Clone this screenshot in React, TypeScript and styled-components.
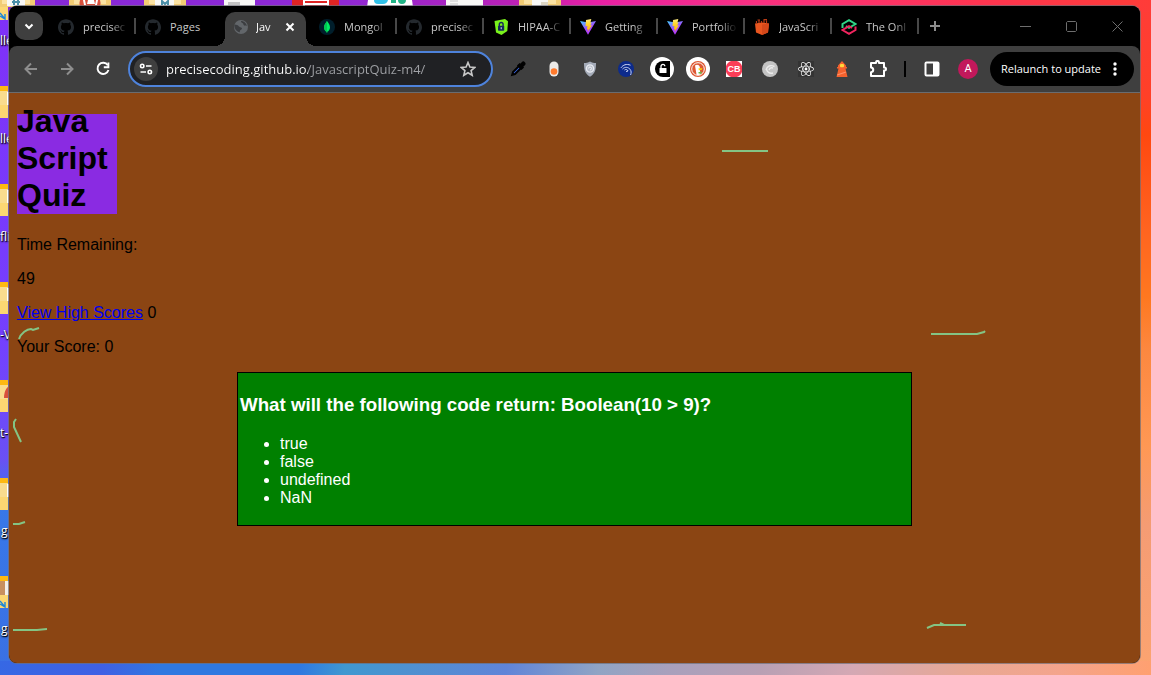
import React, { useState } from "react";
import styled, { createGlobalStyle, css } from "styled-components";
import { SiGithub } from "react-icons/si";
import { FaReact } from "react-icons/fa";

const uiFont = `"Segoe UI", "Open Sans", "Noto Sans", sans-serif`;

const GlobalStyle = createGlobalStyle`
  html, body { margin: 0; padding: 0; }
  body { background: #3a6ae8; }
`;

/* ---------- desktop ---------- */

const Desktop = styled.div`
  position: relative;
  box-sizing: border-box;
  min-height: 100vh;
  padding: 6px 11px 12px 9px;
  display: flex;
  overflow: hidden;
  background:
    linear-gradient(to right, #8628d8 0%, #8f28d4 30%, #b820b8 44%, #e820a4 52%, #fa3080 66%, #ff3450 85%, #ff3c38 100%) top / 100% 12px no-repeat,
    linear-gradient(100deg, #3668e4 0%, #4060e4 9%, #3078e0 14%, #3078e0 26%, #4098d0 30%, #5090d0 36%, #6084d8 44%, #90a4c4 52%, #a8a0bc 58%, #b8a0b4 66%, #d4a8b4 74%, #e8a894 84%, #f4a48c 92%, #ffa070 100%) bottom / 100% 14px no-repeat,
    linear-gradient(to bottom, #8030f8 0%, #7440ff 50%, #6a50f4 68%, #3878e8 74%, #3a70e4 100%) left / 12px 100% no-repeat,
    linear-gradient(to bottom, #ff3c38 0%, #ff4028 14%, #ff4810 20%, #ff6420 34%, #ff7820 44%, #fc8840 52%, #ff9854 66%, #f49c74 78%, #fca470 100%) right / 14px 100% no-repeat;
`;

const Wallpaper = styled.div`
  position: absolute;
  inset: 0;
`;

const TopIcons = styled.svg`
  position: absolute;
  top: 0;
  left: 0;
  display: block;
`;

const Shortcut = styled.div<{ $row: number }>`
  position: absolute;
  left: 0;
  top: ${(p) => p.$row * 98 - 12}px;
  width: 60px;
`;

const ShortcutLabel = styled.span<{ $indent: number }>`
  display: block;
  margin-top: 12px;
  margin-left: ${(p) => p.$indent}px;
  color: #fff;
  font: 12px/16px ${uiFont};
  text-shadow: 0 1px 2px #000, 1px 1px 1px #000;
  white-space: nowrap;
`;

/* ---------- browser window ---------- */

const Window = styled.main`
  position: relative;
  flex: 1;
  min-width: 0;
  display: flex;
  flex-direction: column;
  border-radius: 8px;
  overflow: hidden;
  background: #000;
  box-shadow: 0 0 0 1px rgba(110, 110, 120, 0.7);
`;

const TabStrip = styled.header`
  display: flex;
  align-items: stretch;
  height: 40px;
  background: #000;
  font: 11px/16px ${uiFont};
`;

const bareButton = css`
  display: flex;
  align-items: center;
  justify-content: center;
  padding: 0;
  border: 0;
  background: none;
  color: inherit;
  font: inherit;
  svg { display: block; flex: none; }
`;

const TabSearch = styled.button`
  ${bareButton}
  width: 28px;
  height: 28px;
  margin: 6px;
  border-radius: 10px;
  background: #3f3f3f;
  color: #fff;
`;

const Tabs = styled.nav`
  display: flex;
  min-width: 0;
`;

const Tab = styled.button<{ $divider: boolean }>`
  ${bareButton}
  position: relative;
  justify-content: flex-start;
  gap: 9px;
  width: 87px;
  padding: 1px 8px 0 9px;
  box-sizing: border-box;
  color: #c8c8c8;
  ${(p) =>
    p.$divider &&
    css`
      &::after {
        content: "";
        position: absolute;
        right: 0;
        top: 12px;
        width: 2px;
        height: 16px;
        background: #484848;
      }
    `}
`;

const TabTitle = styled.span`
  flex: 1;
  min-width: 0;
  overflow: hidden;
  white-space: nowrap;
  text-align: left;
  mask-image: linear-gradient(to right, #000 28px, rgba(0, 0, 0, 0.15) 42px);
`;

const PlainTitle = styled(TabTitle)`
  mask-image: none;
`;

const ActiveTitle = styled(TabTitle)`
  mask-image: linear-gradient(to right, #000 12px, rgba(0, 0, 0, 0.4) 18px);
`;

const ActiveTab = styled.div`
  position: relative;
  display: flex;
  align-items: center;
  gap: 7px;
  width: 81px;
  height: 34px;
  margin: 6px 4px 0 2px;
  padding: 0 9px 4px 8px;
  box-sizing: border-box;
  border-radius: 10px 10px 0 0;
  background: #3f3f3f;
  color: #fff;
  svg { display: block; flex: none; }
  &::before,
  &::after {
    content: "";
    position: absolute;
    bottom: 0;
    width: 10px;
    height: 10px;
  }
  &::before {
    left: -10px;
    background: radial-gradient(circle at 0 0, transparent 10px, #3f3f3f 10px);
  }
  &::after {
    right: -10px;
    background: radial-gradient(circle at 100% 0, transparent 10px, #3f3f3f 10px);
  }
`;

const CloseTab = styled.button`
  ${bareButton}
  width: 14px;
  height: 16px;
  color: #fff;
`;

const NewTab = styled.button`
  ${bareButton}
  width: 32px;
  color: #8c8c8c;
`;

const Caption = styled.div`
  display: flex;
  margin-left: auto;
`;

const CaptionButton = styled.button`
  ${bareButton}
  width: 46px;
  color: #6e6e6e;
`;

const Toolbar = styled.div`
  display: flex;
  align-items: center;
  height: 46px;
  padding: 0 6px 0 4px;
  border-bottom: 1px solid #6a6c70;
  border-radius: 8px 8px 0 0;
  background: #3f3f3f;
  font: 11px/16px ${uiFont};
`;

const ToolButton = styled.button<{ $dim?: boolean }>`
  ${bareButton}
  flex: none;
  width: 36px;
  height: 36px;
  color: ${(p) => (p.$dim ? "#8e8e8e" : "#fff")};
`;

const AddressBar = styled.form`
  display: flex;
  align-items: center;
  flex: 1;
  min-width: 0;
  height: 36px;
  margin: 0 7px;
  padding: 0 7px 0 4px;
  box-sizing: border-box;
  border: 2px solid #4e83dc;
  border-radius: 18px;
  background: #202124;
`;

const SiteInfo = styled.button`
  ${bareButton}
  flex: none;
  width: 24px;
  height: 24px;
  border-radius: 50%;
  background: #3f3f3f;
  color: #fff;
`;

const UrlInput = styled.input`
  flex: 1;
  min-width: 0;
  height: 24px;
  margin-left: 8px;
  padding: 0;
  border: 0;
  outline: 0;
  color: #fff;
  font: 13px/24px ${uiFont};
  background: linear-gradient(to right, #fff 142px, #a0a2a6 142px) text;
  -webkit-text-fill-color: transparent;
`;

const StarButton = styled.button`
  ${bareButton}
  flex: none;
  width: 32px;
  height: 32px;
  color: #c8c8c8;
`;

const Divider = styled.span`
  width: 2px;
  height: 16px;
  margin: 0 8px;
  background: #000;
`;

const Avatar = styled.span`
  width: 20px;
  height: 20px;
  border-radius: 50%;
  background: #c2185b;
  color: #fff;
  font: 11px/20px Roboto, ${uiFont};
`;

const Relaunch = styled.button`
  ${bareButton}
  flex: none;
  gap: 6px;
  width: 144px;
  height: 34px;
  margin-left: 4px;
  border-radius: 17px;
  background: #000;
  color: #fff;
  white-space: nowrap;
`;

/* ---------- web page ---------- */

const Page = styled.div`
  position: relative;
  flex: 1;
  padding: 0 8px;
  background: #8b4513;
  color: #000;
  font-family: Arial, "Liberation Sans", sans-serif;
  font-size: 16px;
  line-height: normal;
`;

const QuizTitle = styled.h1`
  display: flex;
  align-items: flex-end;
  width: 100px;
  height: 100px;
  margin: 21px 0 22px;
  background: blueviolet;
  font-size: 32px;
  line-height: 37px;
`;

const Line = styled.p`
  margin: 0 0 16px;
  line-height: 18px;
`;

const ScoresLink = styled.a`
  color: #0000ee;
`;

const QuestionBox = styled.section`
  width: 60%;
  margin: 0 auto;
  padding: 2px;
  border: 1px solid #000;
  background: green;
  color: #fff;
`;

const Question = styled.h3`
  margin: 19px 0 20px;
  line-height: 21px;
`;

const Answers = styled.ul`
  margin: 0 0 16px;
  padding-left: 40px;
  line-height: 18px;
`;

const Scribbles = styled.svg`
  position: absolute;
  top: 0;
  left: 0;
  pointer-events: none;
`;

/* ---------- icons ---------- */

const Github = () => <SiGithub size={16} color="#24292e" />;

const Globe = () => (
  <svg width="16" height="16" viewBox="0 0 16 16">
    <circle cx="8" cy="8" r="7" fill="#62666a" />
    <path d="M1.400 5.500C3.500 5.500 5 6.200 6 7.400C7 8.600 9 8 9 9.600C9 11 7 10.600 6.900 12L6.800 13.200C4 13 1 10 1.400 5.500Z" fill="#3b3d40" />
    <path d="M8 2C8 3.600 9 3.800 9.800 4.200C10.800 4.800 10 6 11.300 6.400C12.300 6.700 13 6.400 13.800 7C13.400 4.200 11 2 8 2Z" fill="#3b3d40" />
  </svg>
);

const Mongo = () => (
  <svg width="16" height="16" viewBox="0 0 16 16">
    <circle cx="8" cy="8" r="8" fill="#001e2b" />
    <path d="M8 2C9.500 4.200 11 5.800 11 8.400C11 10.800 9.500 12 8.300 12.800L8.200 14H7.800L7.700 12.800C6.500 12 5 10.800 5 8.400C5 5.800 6.800 4 8 2Z" fill="#00ed64" />
    <path d="M8 2V14H7.800L7.700 12.800C6.500 12 5 10.800 5 8.400C5 5.800 6.800 4 8 2Z" fill="#00c853" />
  </svg>
);

const Hipaa = () => (
  <svg width="16" height="16" viewBox="0 0 16 16">
    <path d="M1.500 2L12 0L15 2.200L14.300 12L8.500 16L3 13.500Z" fill="#7af21c" />
    <rect x="5" y="6.800" width="6.200" height="5" rx="0.800" fill="#15295c" />
    <path d="M6.300 7V5.400A1.900 1.900 0 0 1 10.100 5.400V7" fill="none" stroke="#15295c" strokeWidth="1.400" />
    <rect x="7.700" y="8.200" width="1" height="2" fill="#cfe3ff" />
  </svg>
);

const Vite = () => (
  <svg width="16" height="16" viewBox="0 0 16 16">
    <defs>
      <linearGradient id="viteBody" x1="0" y1="0" x2="0.600" y2="1">
        <stop offset="0" stopColor="#41d1ff" />
        <stop offset="0.600" stopColor="#a04cfe" />
        <stop offset="1" stopColor="#bd34fe" />
      </linearGradient>
      <linearGradient id="viteBolt" x1="0" y1="0" x2="0" y2="1">
        <stop offset="0" stopColor="#ffea83" />
        <stop offset="0.300" stopColor="#ffdd35" />
        <stop offset="1" stopColor="#ffa800" />
      </linearGradient>
    </defs>
    <path d="M0 2L8 3.400L16 2L8 15.800Z" fill="url(#viteBody)" />
    <path d="M11.300 0L6 1L5.500 7.200L7.400 6.900L6.900 10.600L8.200 10.200L7.600 13L12 6.200L10.100 6.500L11.600 3.600L10.400 3.800Z" fill="url(#viteBolt)" />
  </svg>
);

const Clay = () => (
  <svg width="16" height="16" viewBox="0 0 16 16">
    <path d="M1 4.500L8 3.500L15 4.500L14 13.500L8 16L2 13.500Z" fill="#e8551f" />
    <path d="M8 5.500L15 4.500L14 13.500L8 16Z" fill="#d4481a" />
    <path d="M2.500 4V2M5 4V1.500M7.500 4V2M10 4V1M12.500 4V1.500M3.500 1H6M9.500 0.600H13" stroke="#b83a14" strokeWidth="1.200" fill="none" />
  </svg>
);

const Odin = () => (
  <svg width="16" height="16" viewBox="0 0 16 16" fill="none" strokeWidth="2">
    <path d="M1.500 9V5L8 1.200L14.500 5L8 8.800L5 7" stroke="#2fd486" />
    <path d="M14.500 7.500V11L8 14.800L1.500 11L8 7.200L11 9" stroke="#f0245e" />
  </svg>
);

const Eyedropper = () => (
  <svg width="16" height="16" viewBox="0 0 16 16">
    <path d="M8.800 5.200L3 11L2.200 13.800L5 13L10.800 7.200" fill="#3b6cf6" stroke="#000" strokeWidth="2" />
    <path d="M8 4.600L9.600 3L13 6.500L11.500 8Z" fill="#000" stroke="#000" strokeWidth="1.500" />
    <path d="M11 5L13.300 2.700" stroke="#000" strokeWidth="4.400" strokeLinecap="round" />
  </svg>
);

const Pill = () => (
  <svg width="16" height="16" viewBox="0 0 16 16">
    <rect x="3.500" y="0.500" width="9" height="15" rx="4.500" fill="#eceae8" />
    <circle cx="8" cy="10.500" r="3.300" fill="#ff7a2c" />
  </svg>
);

const Shield = () => (
  <svg width="16" height="16" viewBox="0 0 16 16">
    <path d="M8 0.500C10 1.700 12 2 14 2C14 8 13.500 12.500 8 15.700C2.500 12.500 2 8 2 2C4 2 6 1.700 8 0.500Z" fill="#a4abb8" />
    <circle cx="8" cy="7.500" r="3.600" fill="#b8bec9" stroke="#e8ebf2" strokeWidth="1.400" />
    <path d="M6.500 7.500A1.500 1.500 0 1 1 8 9" stroke="#f0f2f6" fill="none" />
  </svg>
);

const Falcon = () => (
  <svg width="16" height="16" viewBox="0 0 16 16">
    <circle cx="8" cy="8" r="8" fill="#0d2b8c" />
    <path d="M3 6.800C5 3.800 8.500 2.600 12.500 4.200M4.500 8C7 5.600 10 6 12 8.200C13.500 10 13.300 12 12.600 14M6.500 9C8 8 9.500 8.500 10 10L8 10.500" fill="none" stroke="#cfd8f5" strokeWidth="1" />
  </svg>
);

const LockDisc = () => (
  <svg width="24" height="24" viewBox="0 0 24 24">
    <circle cx="12" cy="12" r="12" fill="#fff" />
    <path d="M20 4H13A8 8 0 0 0 13 20H20Z" fill="#000" />
    <rect x="9.500" y="11" width="7" height="5" rx="0.500" fill="#fff" />
    <path d="M11 11V9.300A1.900 1.900 0 0 1 14.800 9.300" fill="none" stroke="#fff" strokeWidth="1.300" />
  </svg>
);

const Duck = () => (
  <svg width="24" height="24" viewBox="0 0 24 24">
    <circle cx="12" cy="12" r="12" fill="#fff" />
    <circle cx="12" cy="12" r="8" fill="#de5833" />
    <circle cx="12" cy="12" r="6.300" fill="#de5833" stroke="#fff" strokeWidth="1" />
    <path d="M9 8.500C10.500 7.200 13.300 7.500 13.800 10L14 14L14.500 17.600C13 18.200 11.500 18.200 10.500 17.500Z" fill="#fff" />
    <path d="M12.500 11.300L16.500 11.200L15.500 13L12.800 13.300Z" fill="#fdd20a" />
    <path d="M12.300 15.200L15.500 14.500V16.700L12.600 16.600Z" fill="#65bc46" />
  </svg>
);

const CbText = styled.span`
  display: grid;
  place-items: center;
  width: 16px;
  height: 16px;
  background: radial-gradient(circle, #fb3d57 8px, #fff 9px);
  color: #fff;
  font: bold 9px/16px "Liberation Sans Narrow", "Liberation Sans", sans-serif;
`;

const GreyDisc = () => (
  <svg width="16" height="16" viewBox="0 0 16 16" fill="none">
    <circle cx="8" cy="8" r="8" fill="#c4c4c4" />
    <path d="M4 9C5 5 8.500 3.500 12.500 5.500M4.500 7.500C4.500 11 7.500 12.800 11 12M7 9C7.500 7 9 6.500 11 7" stroke="#ececec" strokeWidth="1.400" />
  </svg>
);

const ReactBadge = styled.span`
  display: flex;
  background: #343434;
  color: #fff;
`;

const Lighthouse = () => (
  <svg width="16" height="16" viewBox="0 0 16 16">
    <path d="M4 4.500L8 0L12 4.500V6H13V7.500H11.500L13.500 16H2.500L4.500 7.500H3V6H4Z" fill="#f4622e" />
    <rect x="6" y="3" width="4" height="3.200" rx="1" fill="#ffd83a" />
    <path d="M3.200 14L12 11" stroke="#ff9068" strokeWidth="1.300" />
  </svg>
);

const Puzzle = () => (
  <svg width="18" height="18" viewBox="0 0 18 18" fill="none" stroke="#fff" strokeWidth="2" strokeLinejoin="round">
    <path d="M2 3H7V2.400A1.400 1.400 0 0 1 10 2.400V3H15V7.500H15.500A1.500 1.500 0 0 1 15.500 10.500H15V16H2V12.200C5 12 5 7.600 2 7.400Z" />
  </svg>
);

const SidePanel = () => (
  <svg width="16" height="16" viewBox="0 0 16 16">
    <rect x="1.500" y="1.500" width="13" height="13" rx="1" fill="none" stroke="#fff" strokeWidth="2" />
    <rect x="9" y="2" width="5.500" height="12" fill="#fff" />
  </svg>
);

const Strokes = ({ d, size = 16, width = 2 }: { d: string; size?: number; width?: number }) => (
  <svg width={size} height={size} viewBox={`0 0 ${size} ${size}`} fill="none" stroke="currentColor" strokeWidth={width}>
    <path d={d} />
  </svg>
);

const Reload = () => (
  <svg width="16" height="16" viewBox="0 0 16 16" fill="none" stroke="currentColor" strokeWidth="1.900">
    <path d="M12.800 4.200A5.600 5.600 0 1 0 13.500 9" />
    <path d="M13.400 1.500V6.200H8.800" />
  </svg>
);

const Tune = () => (
  <svg width="16" height="16" viewBox="0 0 16 16" fill="none" stroke="currentColor" strokeWidth="1.600">
    <circle cx="4.200" cy="5" r="1.700" />
    <path d="M8 5H13.500M2.500 11H8" />
    <circle cx="11.800" cy="11" r="1.700" />
  </svg>
);

const Star = () => (
  <svg width="16" height="16" viewBox="0 0 16 16" fill="none" stroke="currentColor" strokeWidth="1.600">
    <path d="M8 1.500L9.900 6L14.800 6.400L11.100 9.600L12.200 14.300L8 11.800L3.800 14.300L4.900 9.600L1.200 6.400L6.100 6Z" />
  </svg>
);

const Dots = () => (
  <svg width="16" height="16" viewBox="0 0 16 16" fill="currentColor">
    <circle cx="8" cy="3" r="1.700" />
    <circle cx="8" cy="8" r="1.700" />
    <circle cx="8" cy="13" r="1.700" />
  </svg>
);

const FolderEdge = ({ variant }: { variant: string }) => (
  <svg width="10" height="33" viewBox="0 0 10 33" display="block">
    <path d="M0 0H8V32H0Z" fill="#f9dc8e" />
    <path d="M0 0H8V5H0Z" fill="#fdb913" />
    <path d="M0 19H8V32H0Z" fill="#fcd772" />
    {variant === "doc" && <rect x="7" y="6" width="2" height="13" fill="#fff" />}
    {variant === "red" && <path d="M9 6C6 8 4 12 4 18H9Z" fill="#d8503c" />}
    {variant === "brown" && (
      <>
        <rect y="5" width="5" height="14" fill="#c89060" />
        <rect x="5" y="5" width="4" height="14" fill="#f4f0ea" />
      </>
    )}
    {(variant === "brown" || variant === "shortcut") && (
      <path d="M0 28L5 31V26M0 25L5 31" fill="none" stroke="#1b86d8" strokeWidth="1.400" />
    )}
  </svg>
);

const shortcuts = [
  { label: "lle", variant: "shortcut", indent: 0 },
  { label: "lle", variant: "doc", indent: 0 },
  { label: "fli", variant: "doc", indent: 0 },
  { label: "-V", variant: "doc", indent: 0 },
  { label: "t-", variant: "red", indent: 0 },
  { label: "g", variant: "doc", indent: 1 },
  { label: "g", variant: "brown", indent: 1 },
];

const tabsBefore = [
  { title: "precisec", icon: <Github />, divider: true, fade: true },
  { title: "Pages", icon: <Github />, divider: false, fade: false },
];

const tabsAfter = [
  { title: "MongoI", icon: <Mongo /> },
  { title: "precisec", icon: <Github /> },
  { title: "HIPAA-C", icon: <Hipaa /> },
  { title: "Getting", icon: <Vite /> },
  { title: "Portfolio", icon: <Vite /> },
  { title: "JavaScri", icon: <Clay /> },
  { title: "The Onl", icon: <Odin /> },
];

const extensions = [
  { name: "Color picker", icon: <Eyedropper /> },
  { name: "Toggle", icon: <Pill /> },
  { name: "Shield", icon: <Shield /> },
  { name: "Falcon", icon: <Falcon /> },
  { name: "Lock", icon: <LockDisc /> },
  { name: "DuckDuckGo", icon: <Duck /> },
  { name: "CB", icon: <CbText>CB</CbText> },
  { name: "Swirl", icon: <GreyDisc /> },
  { name: "React Developer Tools", icon: <ReactBadge><FaReact size={16} /></ReactBadge> },
  { name: "Lighthouse", icon: <Lighthouse /> },
  { name: "Extensions", icon: <Puzzle /> },
];

const answers = ["true", "false", "undefined", "NaN"];

export default function App() {
  const [url, setUrl] = useState("precisecoding.github.io/JavascriptQuiz-m4/");
  return (
    <Desktop>
      <GlobalStyle />
      <Wallpaper>
        {shortcuts.map((s, i) => (
          <Shortcut key={i} $row={i}>
            <FolderEdge variant={s.variant} />
            <ShortcutLabel $indent={s.indent}>{s.label}</ShortcutLabel>
          </Shortcut>
        ))}
        <TopIcons width="570" height="7">
          <path d="M0 0H35V7H0ZM69 0H111V7H69ZM144 0H186V7H144ZM519 0H561V7H519Z" fill="#f2cc74" />
          <path d="M2 0H30V4H2ZM74 0H106V4H74ZM149 0H181V4H149ZM524 0H556V4H524Z" fill="#fbe3a4" />
          <path d="M7 0H25V6H7ZM155 0H174V6H155ZM224 0H255V7H224ZM446 0H483V7H446ZM532 0H548V6H532Z" fill="#f8f8f6" />
          <path d="M12 2H20M14 0V5M18 0V5M162 5V1L165 4L168 1V5" fill="none" stroke="#4b8fa8" strokeWidth="2" />
          <path d="M80 7A10 10 0 0 1 80 0H100A10 10 0 0 1 100 7Z" fill="#d8503c" />
          <path d="M83 0H85L86 5H84ZM88 0H94L95 4H87ZM96 0H98L97 5H95Z" fill="#fff" />
          <path d="M228 2H240V5H228Z" fill="#c4c4c4" />
          <path d="M292 0H339V7H292Z" fill="#e02424" />
          <path d="M303 0H329V1H303ZM303 3H329V5H303ZM303 0H305V7H303ZM327 0H329V7H327Z" fill="#fff" />
          <path d="M368 0H412L413 7H367Z" fill="#fff" />
          <path d="M374 0H388Q387 4 383 4H378Q374 4 374 0Z" fill="#30c0e8" />
          <path d="M391 0H396V3H391ZM398 0H406Q406 4 402 4Q398 4 398 0Z" fill="#20b486" />
          <path d="M450 1H458M450 4H458" stroke="#c8c8c8" />
          <path d="M541 2H548V5H541Z" fill="#ddd6c4" />
        </TopIcons>
      </Wallpaper>

      <Window>
        <TabStrip>
          <TabSearch aria-label="Search tabs">
            <Strokes d="M4.500 6.500L8 10L11.500 6.500" />
          </TabSearch>
          <Tabs>
            {tabsBefore.map((t) => (
              <Tab key={t.title} $divider={t.divider}>
                {t.icon}
                {t.fade ? <TabTitle>{t.title}</TabTitle> : <PlainTitle>{t.title}</PlainTitle>}
              </Tab>
            ))}
            <ActiveTab>
              <Globe />
              <ActiveTitle>Jav</ActiveTitle>
              <CloseTab aria-label="Close tab">
                <Strokes size={14} d="M3.500 3.500L10.500 10.500M10.500 3.500L3.500 10.500" />
              </CloseTab>
            </ActiveTab>
            {tabsAfter.map((t, i) => (
              <Tab key={i} $divider>
                {t.icon}
                <TabTitle>{t.title}</TabTitle>
              </Tab>
            ))}
          </Tabs>
          <NewTab aria-label="New tab">
            <Strokes d="M8 3V13M3 8H13" width={2} />
          </NewTab>
          <Caption>
            <CaptionButton aria-label="Minimize"><Strokes size={11} d="M0 5.500H11" width={1} /></CaptionButton>
            <CaptionButton aria-label="Maximize"><Strokes size={11} d="M1.500 0.500H9.500L10.500 1.500V9.500L9.500 10.500H1.500L0.500 9.500V1.500Z" width={1} /></CaptionButton>
            <CaptionButton aria-label="Close"><Strokes size={11} d="M0.500 0.500L10.500 10.500M10.500 0.500L0.500 10.500" width={1} /></CaptionButton>
          </Caption>
        </TabStrip>

        <Toolbar>
          <ToolButton $dim aria-label="Back"><Strokes d="M14 8H3M8 2.500L2.500 8L8 13.500" width={2} /></ToolButton>
          <ToolButton $dim aria-label="Forward"><Strokes d="M2 8H13M8 2.500L13.500 8L8 13.500" width={2} /></ToolButton>
          <ToolButton aria-label="Reload"><Reload /></ToolButton>
          <AddressBar onSubmit={(e) => e.preventDefault()}>
            <SiteInfo type="button" aria-label="Site information"><Tune /></SiteInfo>
            <UrlInput aria-label="Address" value={url} onChange={(e) => setUrl(e.target.value)} />
            <StarButton type="button" aria-label="Bookmark this page"><Star /></StarButton>
          </AddressBar>
          {extensions.map((x) => (
            <ToolButton key={x.name} aria-label={x.name}>{x.icon}</ToolButton>
          ))}
          <Divider />
          <ToolButton aria-label="Side panel"><SidePanel /></ToolButton>
          <ToolButton aria-label="Profile"><Avatar>A</Avatar></ToolButton>
          <Relaunch>
            Relaunch to update
            <Dots />
          </Relaunch>
        </Toolbar>

        <Page>
          <QuizTitle>Java Script Quiz</QuizTitle>
          <Line>Time Remaining:</Line>
          <Line>49</Line>
          <Line><ScoresLink href="#scores">View High Scores</ScoresLink> 0</Line>
          <Line>Your Score: 0</Line>
          <QuestionBox>
            <Question>What will the following code return: Boolean(10 &gt; 9)?</Question>
            <Answers>
              {answers.map((a) => <li key={a}>{a}</li>)}
            </Answers>
          </QuestionBox>
          <Scribbles width="1000" height="560" fill="none" stroke="#84c484" strokeWidth="2">
            <path d="M713 58H759M922 241H968L975 239L976 238M10 246C12 240 18 236 22 236L24 237L30 235M7 326L5 329V334L12 349M4 431H10L16 429M4 537H28L38 536M918 535L925 532H957M931 530L935 532" />
          </Scribbles>
        </Page>
      </Window>
    </Desktop>
  );
}
